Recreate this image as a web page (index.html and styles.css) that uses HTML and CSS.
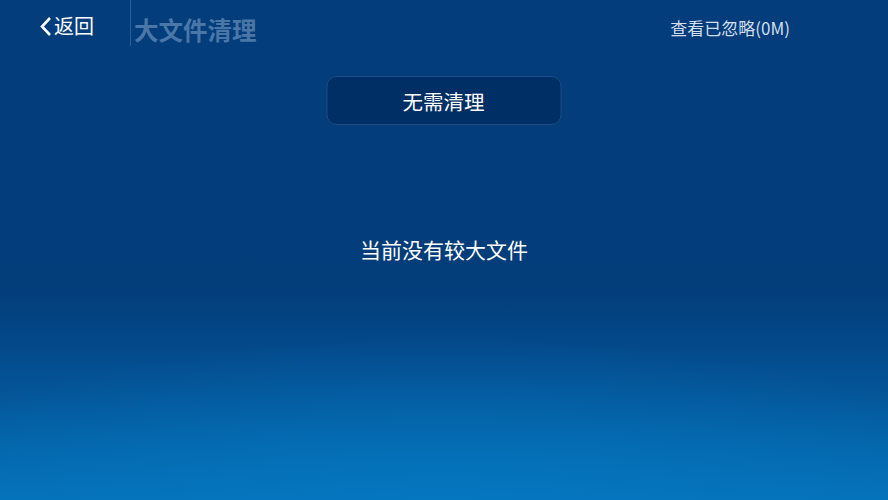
FILE: index.html
```html
<!DOCTYPE html>
<html lang="zh-CN">
<head>
    <meta charset="UTF-8">
    <meta name="viewport" content="width=device-width, initial-scale=1.0">
    <title>大文件清理</title>
    <link rel="stylesheet" href="styles.css">
</head>
<body>
    <div class="screen">
        <div class="top-bar">
            <div class="back">
                <svg class="back-icon" width="13" height="21" viewBox="0 0 13 21">
                    <path d="M11 2 L3 10.5 L11 19" fill="none" stroke="#ffffff" stroke-width="2.6" stroke-linejoin="miter"/>
                </svg>
                <span>返回</span>
            </div>
            <div class="divider"></div>
            <div class="page-title">大文件清理</div>
            <div class="ignored">查看已忽略(0M)</div>
        </div>

        <div class="action-row">
            <button class="clean-btn">无需清理</button>
        </div>

        <div class="empty-msg">当前没有较大文件</div>
    </div>
</body>
</html>
```
FILE: styles.css
```css
* {
    margin: 0;
    padding: 0;
    box-sizing: border-box;
}

html, body {
    width: 888px;
    height: 500px;
    overflow: hidden;
}

body {
    font-family: "Noto Sans CJK SC", "Noto Sans", sans-serif;
    color: #ffffff;
}

.screen {
    width: 888px;
    height: 500px;
    background:
        radial-gradient(ellipse 600px 160px at 50% 100%, rgba(4, 124, 198, 0.55) 0%, rgba(4, 118, 190, 0) 100%),
        linear-gradient(180deg, #033d7b 0%, #033d7a 58%, #034889 68%, #04579a 80%, #0466ab 90%, #0571b9 100%);
}

.top-bar {
    display: flex;
    align-items: flex-start;
    height: 46px;
}

.back {
    display: flex;
    align-items: center;
    gap: 2px;
    width: 130px;
    padding: 14px 0 0 39px;
    font-size: 20px;
    line-height: 24px;
}

.back-icon {
    margin-top: 1px;
}

.divider {
    width: 1px;
    height: 46px;
    background: rgba(120, 160, 210, 0.35);
}

.page-title {
    padding: 15px 0 0 3px;
    font-size: 24.5px;
    line-height: 30px;
    font-weight: 700;
    color: #4a76a8;
}

.ignored {
    margin-left: auto;
    margin-right: 98px;
    padding-top: 16px;
    font-size: 17px;
    line-height: 24px;
    color: #d2deec;
}

.action-row {
    display: flex;
    justify-content: center;
    padding-top: 30px;
}

.clean-btn {
    width: 235px;
    height: 49px;
    background: #002f65;
    border: 1px solid #1d4c86;
    border-radius: 10px;
    color: #ffffff;
    font-family: inherit;
    font-size: 20.5px;
    transform: translateX(-0.5px);
}

.empty-msg {
    margin-top: 109px;
    text-align: center;
    font-size: 21px;
    line-height: 30px;
}
```
